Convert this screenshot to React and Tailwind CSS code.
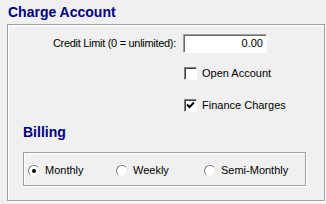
import React, { useState } from "react";

const Check = ({ checked, label }) => (
  <div className="flex items-center h-[13px] pl-[176px]">
    <div className="w-[13px] h-[13px] bg-white border border-t-[#808080] border-l-[#808080] border-b-white border-r-white shadow-[inset_1px_1px_0_#404040] flex items-center justify-center">
      {checked && (
        <svg width="9" height="9" viewBox="0 0 9 9">
          <path d="M1 3.5 L3.5 6 L8 1.5" stroke="#000" strokeWidth="2" fill="none" />
        </svg>
      )}
    </div>
    <span className="ml-[5px] text-[11px] leading-[13px]">{label}</span>
  </div>
);

const Radio = ({ checked, label, onClick }) => (
  <div className="flex items-center w-[88px] cursor-default" onClick={onClick}>
    <div className="w-[12px] h-[12px] rounded-full bg-white border border-t-[#808080] border-l-[#808080] border-b-[#e8e8e8] border-r-[#e8e8e8] flex items-center justify-center">
      {checked && <div className="w-[4px] h-[4px] rounded-full bg-black" />}
    </div>
    <span className="ml-[5px] text-[11px] leading-[13px]">{label}</span>
  </div>
);

const App = () => {
  const [billing, setBilling] = useState("Monthly");

  return (
    <div className="w-[326px] h-[204px] bg-[#f0f0f0] overflow-hidden text-black font-['Liberation_Sans',Arial,sans-serif]">
      <h3 className="pt-[4px] pl-[8px] text-[14px] leading-[16px] font-bold text-[#000080]">Charge Account</h3>
      <div className="mt-[4px] ml-[7px] w-[318px] h-[177px] border border-[#a0a0a0] shadow-[inset_1px_1px_0_#fff,1px_1px_0_#fff]">
        <div className="mt-[9px] flex items-center">
          <label className="w-[168px] text-right text-[11px] leading-[13px] tracking-[-0.3px]">Credit Limit (0 = unlimited):</label>
          <div className="ml-[7px] w-[84px] h-[19px] bg-white border border-t-[#a0a0a0] border-l-[#a0a0a0] border-b-white border-r-white shadow-[inset_1px_1px_0_#696969] flex items-center justify-end pr-[3px] text-[11px]">
            0.00
          </div>
        </div>
        <div className="mt-[14px]">
          <Check label="Open Account" />
        </div>
        <div className="mt-[19px]">
          <Check checked label="Finance Charges" />
        </div>
        <h3 className="mt-[12px] pl-[15px] text-[14px] leading-[16px] font-bold text-[#000080]">Billing</h3>
        <div className="mt-[12px] ml-[15px] w-[283px] h-[34px] border border-[#a0a0a0] shadow-[inset_1px_1px_0_#fff,1px_1px_0_#fff] flex items-center pl-[4px] pt-[3px]">
          {["Monthly", "Weekly", "Semi-Monthly"].map((b) => (
            <Radio key={b} label={b} checked={billing === b} onClick={() => setBilling(b)} />
          ))}
        </div>
      </div>
    </div>
  );
};

export default App;
